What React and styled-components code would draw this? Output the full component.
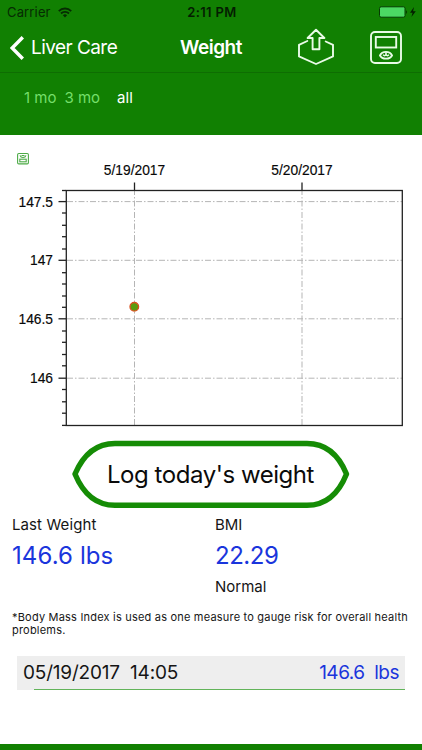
import React from "react"
import styled, { createGlobalStyle } from "styled-components"

const green = "#118002"
const blue = "#1a35dc"

const GlobalStyle = createGlobalStyle`
  * {
    box-sizing: border-box;
  }

  body {
    margin: 0;
    background: #fff;
    font-family: Inter, sans-serif;
    color: #151515;
  }

  button {
    font: inherit;
    color: inherit;
    background: none;
    border: 0;
    padding: 0;
  }
`

const Screen = styled.div`
  display: flex;
  flex-direction: column;
  width: 422px;
  height: 750px;
  overflow: hidden;
  border-bottom: 6px solid ${green};
`

const Header = styled.header`
  height: 135px;
  background: ${green};
`

const StatusBar = styled.div`
  display: grid;
  grid-template-columns: 1fr auto 1fr;
  align-items: center;
  height: 23px;
  padding: 1px 5px 0 7px;
  font-size: 13px;
  line-height: 22px;
  color: #062b02;
`

const StatusGroup = styled.div`
  display: flex;
  align-items: center;
  gap: ${(props) => props.$gap}px;
  justify-content: ${(props) => (props.$end ? "flex-end" : "flex-start")};
  letter-spacing: 0.15px;
`

const Clock = styled.div`
  font-weight: 600;
  letter-spacing: 0.35px;
  color: #041d01;
`

const NavBar = styled.nav`
  display: grid;
  grid-template-columns: 1fr auto 1fr;
  align-items: center;
  height: 50px;
  padding: 0 10px;
  border-bottom: 1px solid #0e6d02;
  color: #fff;
`

const BackButton = styled.button`
  display: flex;
  align-items: center;
  gap: 7px;
  font-size: 19px;
  letter-spacing: -0.55px;
`

const Title = styled.h1`
  margin: 0;
  font-size: 19px;
  font-weight: 600;
  letter-spacing: -0.5px;
`

const Actions = styled.div`
  display: flex;
  align-items: center;
  justify-content: flex-end;
  gap: 35px;
  margin-right: 10px;
`

const Ranges = styled.div`
  display: flex;
  padding: 15px 0 0 24px;
  font-size: 15px;
  line-height: 19px;
`

const Range = styled.button`
  margin-right: ${(props) => props.$space}px;
  line-height: 19px;
  color: ${(props) => (props.$active ? "#fff" : "#75df6a")};
`

const ChartArea = styled.section`
  height: 302px;

  svg {
    display: block;
  }

  text {
    font-family: "Liberation Sans", Arial, sans-serif;
    font-size: 13.8px;
    fill: #080808;
    stroke: #080808;
    stroke-width: 0.15px;
  }
`

const LogButton = styled.button`
  display: grid;
  place-items: center;
  flex: none;
  width: 280px;
  height: 72px;
  margin-left: 71px;
  color: #0b0b0b;
  font-size: 24px;

  & > * {
    grid-area: 1 / 1;
  }
`

const LogLabel = styled.span`
  padding: 3px 1px 0 0;
  letter-spacing: -0.45px;
`

const Stats = styled.section`
  display: grid;
  grid-template-columns: 203px 1fr;
  padding: 6px 0 0 12px;
  height: 97px;
`

const StatLabel = styled.div`
  font-size: 15px;
  line-height: 20px;
  letter-spacing: ${(props) => props.$tracking || 0}px;
`

const StatValue = styled.div`
  margin: 5px 0;
  font-size: 24px;
  line-height: 32px;
  letter-spacing: ${(props) => props.$tracking || 0}px;
  color: ${blue};
`

const Note = styled.p`
  margin: 0;
  height: 50px;
  padding: 5px 8px 0 12px;
  font-size: 11px;
  line-height: 13px;
  letter-spacing: 0.2px;
`

const Entry = styled.div`
  display: grid;
  grid-template-columns: 1fr auto;
  grid-template-rows: 33px 1px;
  flex: none;
  margin: 0 17px;
  font-size: 19px;
  line-height: 33px;
  letter-spacing: -0.2px;
  white-space: pre;
  background: #eee;

  &::after {
    content: "";
    grid-column: 1 / -1;
    margin-left: 17px;
    background: #62b45a;
  }
`

const EntryDate = styled.span`
  padding-left: 6px;
`

const EntryValue = styled.span`
  padding-right: 6px;
  letter-spacing: -0.5px;
  color: ${blue};
`

function WifiIcon() {
  return (
    <svg width="14" height="11" viewBox="0 0 14 11" fill="none" stroke="#062b02" strokeWidth="1.9">
      <path d="M.8 4.1a8.8 8.8 0 0 1 12.4 0M3 6.5a5.7 5.7 0 0 1 8 0" />
      <path d="M7 10.5 4.9 8.3a3 3 0 0 1 4.2 0Z" fill="#062b02" stroke="none" />
    </svg>
  )
}

function BatteryIcon() {
  return (
    <svg width="38" height="12" viewBox="0 0 38 12">
      <rect x=".5" y=".8" width="25.5" height="10.4" rx="1.6" fill="#4cd964" stroke="#063b02" />
      <path d="M27 4.2c1.4.4 1.4 3.2 0 3.6Z" fill="#063b02" />
      <path d="M35 1 31 6.8h2.6L32.4 11l4.4-5.8h-2.7Z" fill="#041d01" />
    </svg>
  )
}

function BackIcon() {
  return (
    <svg width="14" height="24" viewBox="0 0 14 24" fill="none" stroke="#fff" strokeWidth="3.4">
      <path d="M12.8 1.3 2.2 12l10.6 10.7" />
    </svg>
  )
}

function ShareIcon() {
  return (
    <svg width="38" height="40" viewBox="0 0 38 40" fill="none" stroke="#e9fbe7" strokeWidth="1.9" strokeLinejoin="round" strokeLinecap="round">
      <path d="M10.3 13 2 16.8v11.6l17 7.6 17-7.6V16.8L28.7 13.5" />
      <path d="M19 1.8 10.6 10h5v11.3h6.8V10h5Z" />
    </svg>
  )
}

function ScaleIcon() {
  return (
    <svg width="32" height="33" viewBox="0 0 32 33" fill="none" stroke="#e9fbe7" strokeWidth="1.9">
      <rect x="1" y="1" width="30" height="31" rx="4" />
      <rect x="5.8" y="6" width="20.4" height="10.5" />
      <path d="M10 24.5q1.6-3.6 6-3.6t6 3.6q-1.6 3.1-6 3.1t-6-3.1Z" />
      <path d="M13.2 23.6q1.3 2.2 2.8 0 1.5 2.2 2.8 0M16 24v-3" strokeWidth="1.6" />
    </svg>
  )
}

const days = [
  { x: 134.5, label: "5/19/2017" },
  { x: 302, label: "5/20/2017" },
]
const weights = [
  { y: 66.6, label: "147.5" },
  { y: 125.3, label: "147" },
  { y: 183.8, label: "146.5" },
  { y: 243.2, label: "146" },
]
const minorTicks = [55.5, 78, 90.3, 101.7, 114, 137.7, 149, 161, 172.3, 196, 207.3, 219.5, 230.8, 254.5, 266.8, 278.2, 290.4]

function Chart() {
  return (
    <ChartArea>
      <svg width="422" height="302" viewBox="0 0 422 302">
        <g fill="none" stroke="#4dab47" strokeWidth="1.1">
          <rect x="17.6" y="18.5" width="10.8" height="10.4" rx="1.2" />
          <rect x="19.8" y="24.2" width="6.4" height="2.6" />
          <path d="M20 20.3q.6 2.2 3 2.2t3-2.2M21.5 20.5h3" />
        </g>
        <g stroke="#b5b5b5" strokeDasharray="6 2 1.5 2">
          {weights.map((w) => (
            <path key={w.label} d={`M67 ${w.y}H402`} />
          ))}
          {days.map((d) => (
            <path key={d.label} d={`M${d.x} 290V55`} />
          ))}
        </g>
        <g stroke="#222" strokeWidth="1.3" fill="none">
          <rect x="66.3" y="55.5" width="336" height="235" />
          {minorTicks.map((y) => (
            <path key={y} d={`M62 ${y}H66`} />
          ))}
          {weights.map((w) => (
            <path key={w.label} d={`M58.5 ${w.y}H66`} />
          ))}
          {days.map((d) => (
            <path key={d.label} d={`M${d.x} 47.5V55`} />
          ))}
        </g>
        {weights.map((w) => (
          <text key={w.label} x="53" y={w.y + 5.1} textAnchor="end">
            {w.label}
          </text>
        ))}
        {days.map((d) => (
          <text key={d.label} x={d.x} y="40" textAnchor="middle">
            {d.label}
          </text>
        ))}
        <circle cx="134.3" cy="171.8" r="4.3" fill="#5a9c0c" stroke="#d9501e" strokeWidth="1.3" />
      </svg>
    </ChartArea>
  )
}

function App() {
  return (
    <>
      <GlobalStyle />
      <Screen>
        <Header>
          <StatusBar>
            <StatusGroup $gap={7}>
              Carrier
              <WifiIcon />
            </StatusGroup>
            <Clock>2:11 PM</Clock>
            <StatusGroup $end>
              <BatteryIcon />
            </StatusGroup>
          </StatusBar>
          <NavBar>
            <BackButton>
              <BackIcon />
              Liver Care
            </BackButton>
            <Title>Weight</Title>
            <Actions>
              <ShareIcon />
              <ScaleIcon />
            </Actions>
          </NavBar>
          <Ranges>
            <Range $space={8}>1 mo</Range>
            <Range $space={17}>3 mo</Range>
            <Range $active>all</Range>
          </Ranges>
        </Header>
        <Chart />
        <LogButton>
          <svg width="280" height="72" viewBox="0 0 280 72" fill="none" stroke="#158c05" strokeWidth="5.4" strokeLinejoin="round">
            <path d="M44 6.5H236Q263 6.5 275.5 37Q263 68.3 236 68.3H44Q17 68.3 4 37Q17 6.5 44 6.5Z" />
          </svg>
          <LogLabel>Log today's weight</LogLabel>
        </LogButton>
        <Stats>
          <div>
            <StatLabel $tracking={0.1}>Last Weight</StatLabel>
            <StatValue $tracking={0.1}>146.6 lbs</StatValue>
          </div>
          <div>
            <StatLabel>BMI</StatLabel>
            <StatValue $tracking={-0.45}>22.29</StatValue>
            <StatLabel>Normal</StatLabel>
          </div>
        </Stats>
        <Note>*Body Mass Index is used as one measure to gauge risk for overall health problems.</Note>
        <Entry>
          <EntryDate>05/19/2017  14:05</EntryDate>
          <EntryValue>146.6  lbs</EntryValue>
        </Entry>
      </Screen>
    </>
  )
}

export default App
